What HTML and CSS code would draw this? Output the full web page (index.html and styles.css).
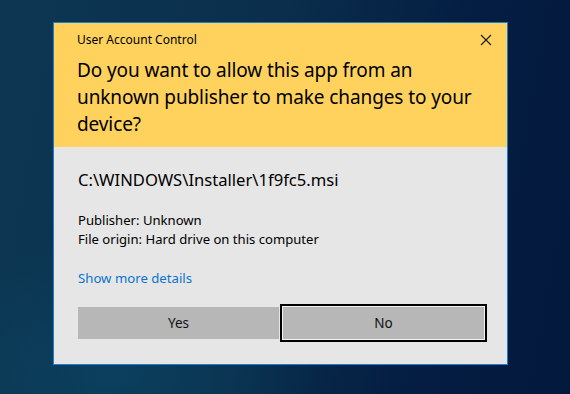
FILE: index.html
```html
<!DOCTYPE html>
<html lang="en">
<head>
<meta charset="utf-8">
<title>User Account Control</title>
<link rel="stylesheet" href="styles.css">
</head>
<body>
<div class="desktop">
  <div class="dialog">
    <div class="header">
      <div class="title-row">
        <span class="title">User Account Control</span>
        <svg class="close" width="12" height="12" viewBox="0 0 12 12" aria-hidden="true">
          <path d="M1 1 L11 11 M11 1 L1 11" stroke="#1a1a1a" stroke-width="1.1" fill="none"/>
        </svg>
      </div>
      <h1 class="question">Do you want to allow this app from an unknown publisher to make changes to your device?</h1>
    </div>
    <div class="body">
      <div class="path">C:\WINDOWS\Installer\1f9fc5.msi</div>
      <div class="meta">
        <div>Publisher: Unknown</div>
        <div>File origin: Hard drive on this computer</div>
      </div>
      <a class="details" href="#">Show more details</a>
      <div class="buttons">
        <button class="btn">Yes</button>
        <button class="btn focused">No</button>
      </div>
    </div>
  </div>
</div>
</body>
</html>
```
FILE: styles.css
```css
html, body {
  margin: 0;
  padding: 0;
}
body {
  width: 570px;
  height: 394px;
  overflow: hidden;
  font-family: "Noto Sans", "Open Sans", sans-serif;
  color: #000;
}
.desktop {
  width: 570px;
  height: 394px;
  padding: 22px 0 0 53px;
  box-sizing: border-box;
  background:
    radial-gradient(ellipse 300px 200px at 20% 95%, rgba(10, 75, 105, 0.55), rgba(10, 75, 105, 0) 70%),
    linear-gradient(100deg, #0c3752 0%, #0a2e4c 45%, #041d42 75%, #03193c 100%);
}
.dialog {
  width: 455px;
  height: 343px;
  box-sizing: border-box;
  border: 1px solid #1a7ed6;
  background: #e6e6e6;
  display: flex;
  flex-direction: column;
}
.header {
  background: #fed25c;
  height: 124px;
  padding: 8px 15px 0 23px;
  box-sizing: border-box;
}
.title-row {
  display: flex;
  justify-content: space-between;
  align-items: center;
  height: 18px;
}
.title {
  font-size: 12px;
  line-height: 18px;
}
.close {
  display: block;
}
.question {
  margin: 8px 0 0 0;
  font-weight: normal;
  font-size: 19px;
  line-height: 27px;
  letter-spacing: -0.1px;
}
.body {
  padding: 22px 20px 0 24px;
  display: flex;
  flex-direction: column;
}
.path {
  font-size: 16.6px;
  line-height: 22px;
}
.meta {
  margin-top: 20px;
  font-size: 13.1px;
  line-height: 19px;
}
.details {
  margin-top: 20px;
  font-size: 13.2px;
  line-height: 19px;
  color: #0a74d0;
  text-decoration: none;
  align-self: flex-start;
}
.buttons {
  margin-top: 19px;
  display: flex;
  gap: 4px;
}
.btn {
  width: 201px;
  height: 32px;
  border: none;
  background: #b7b7b7;
  font-family: inherit;
  font-size: 13.5px;
  color: #111;
  padding: 0;
}
.focused {
  outline: 2px solid #000;
  outline-offset: 1px;
  box-shadow: 0 0 0 1px #f2f2f2;
}
```
